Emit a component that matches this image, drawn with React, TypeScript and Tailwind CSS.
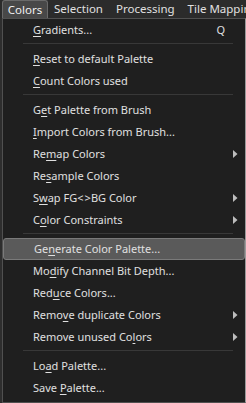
import { ReactNode } from 'react';

type Item =
    | { sep: true }
    | { label: ReactNode; shortcut?: string; sub?: boolean; active?: boolean; sep?: false };

const u = (c: string) => <span className="underline underline-offset-[2px] decoration-1">{c}</span>;

const items: Item[] = [
    { label: <>{u('G')}radients...</>, shortcut: 'Q' },
    { sep: true },
    { label: <>{u('R')}eset to default Palette</> },
    { label: <>{u('C')}ount Colors used</> },
    { sep: true },
    { label: <>G{u('e')}t Palette from Brush</> },
    { label: <>{u('I')}mport Colors from Brush...</> },
    { label: <>Re{u('m')}ap Colors</>, sub: true },
    { label: <>Re{u('s')}ample Colors</> },
    { label: <>S{u('w')}ap FG&lt;&#8202;&gt;BG Color</>, sub: true },
    { label: <>C{u('o')}lor Constraints</>, sub: true },
    { sep: true },
    { label: <>Ge{u('n')}erate Color Palette...</>, active: true },
    { label: <>Mo{u('d')}ify Channel Bit Depth...</> },
    { label: <>Red{u('u')}ce Colors...</> },
    { label: <>Remo{u('v')}e duplicate Colors</>, sub: true },
    { label: <>Remove unused Co{u('l')}ors</>, sub: true },
    { sep: true },
    { label: <>Lo{u('a')}d Palette...</> },
    { label: <>Save {u('P')}alette...</> },
];

function Arrow() {
    return (
        <svg width="5" height="8" viewBox="0 0 5 8" className="fill-[#bdbdbd]">
            <path d="M0 0 L4.5 4 L0 8 Z" />
        </svg>
    );
}

export default function App() {
    return (
        <div className="w-[246px] h-[403px] bg-[#2b2b2b] text-[11px] text-[#e0e0e0] overflow-hidden flex flex-col [font-family:'Noto_Sans',sans-serif]">
            {/* Menu bar */}
            <div className="h-[18px] flex items-stretch whitespace-nowrap text-[11.5px]">
                <div className="shrink-0 ml-[2px] w-[46px] flex items-center justify-center bg-[#484848] border border-b-0 border-[#6a6a6a] rounded-t-[3px] text-[#f0f0f0]">
                    Colors
                </div>
                <div className="shrink-0 pl-[6px] pr-[13px] flex items-center">Selection</div>
                <div className="shrink-0 pr-[13px] flex items-center">Processing</div>
                <div className="shrink-0 flex items-center">Tile Mapping</div>
            </div>

            <div className="flex-1 flex">
                <div className="w-[2px] bg-[#2e2e2e]" />
                {/* Dropdown */}
                <div className="flex-1 bg-[#1f1f1f] border border-[#505050] border-r-[#9a9a9a] flex flex-col">
                    {items.map((it, i) =>
                        it.sep ? (
                            <div key={i} className="h-[7px] pt-[2px] pl-[20px] pr-[12px]">
                                <div className="h-px bg-[#383838]" />
                            </div>
                        ) : (
                            <div
                                key={i}
                                className={`h-[22px] flex items-center pl-[30px] pr-[7px] rounded-[3px] ${
                                    it.active ? 'bg-[#5a5a5a] border border-[#7a7a7a] pl-[29px] pr-[6px]' : ''
                                }`}
                            >
                                <span className="flex-1 whitespace-nowrap">{it.label}</span>
                                {it.shortcut && <span className="mr-[13px]">{it.shortcut}</span>}
                                {it.sub && <Arrow />}
                            </div>
                        )
                    )}
                </div>
            </div>
        </div>
    );
}
